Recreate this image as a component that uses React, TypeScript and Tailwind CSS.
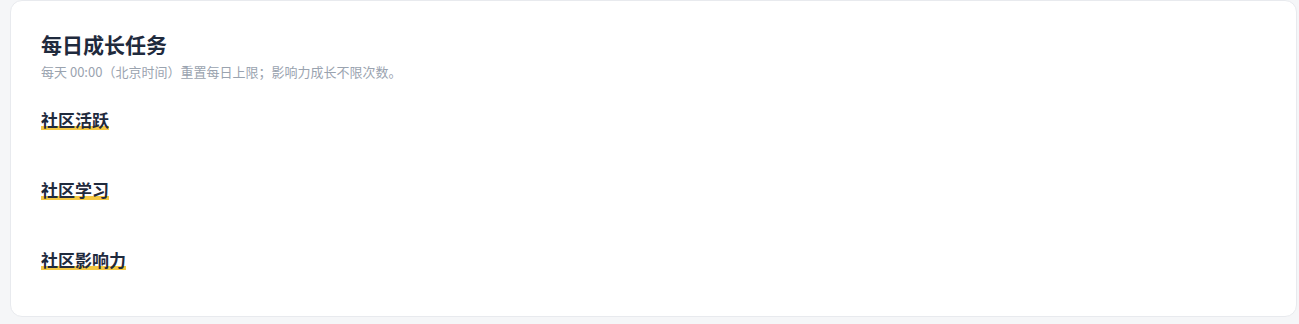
import React from "react";

const sections = ["社区活跃", "社区学习", "社区影响力"];

const App = () => {
  return (
    <div className="min-h-[324px] bg-[#f5f6f8] pl-[10px] pr-[2px] pb-[8px] font-['Noto_Sans_CJK_SC','Noto_Sans',sans-serif]">
      <div className="rounded-b-xl rounded-t-xl border border-[#e8eaee] bg-white px-[30px] pt-[28px] pb-[44px]">
        {/* Header */}
        <h2 className="text-[21px] font-bold leading-[30px] text-[#1f2a3d]">每日成长任务</h2>
        <p className="mt-[3px] text-[13px] leading-[19px] text-[#9aa3af]">
          每天 00:00（北京时间）重置每日上限；影响力成长不限次数。
        </p>
        {/* Sections */}
        <div className="mt-[27px] flex flex-col gap-[46px]">
          {sections.map((s) => (
            <div key={s}>
              <h3 className="relative inline-block text-[17px] font-bold leading-[24px] text-[#1f2a3d]">
                <span className="absolute bottom-[2px] left-0 right-0 h-[4px] bg-[#f5c842]"></span>
                <span className="relative">{s}</span>
              </h3>
            </div>
          ))}
        </div>
      </div>
    </div>
  );
};

export default App;
